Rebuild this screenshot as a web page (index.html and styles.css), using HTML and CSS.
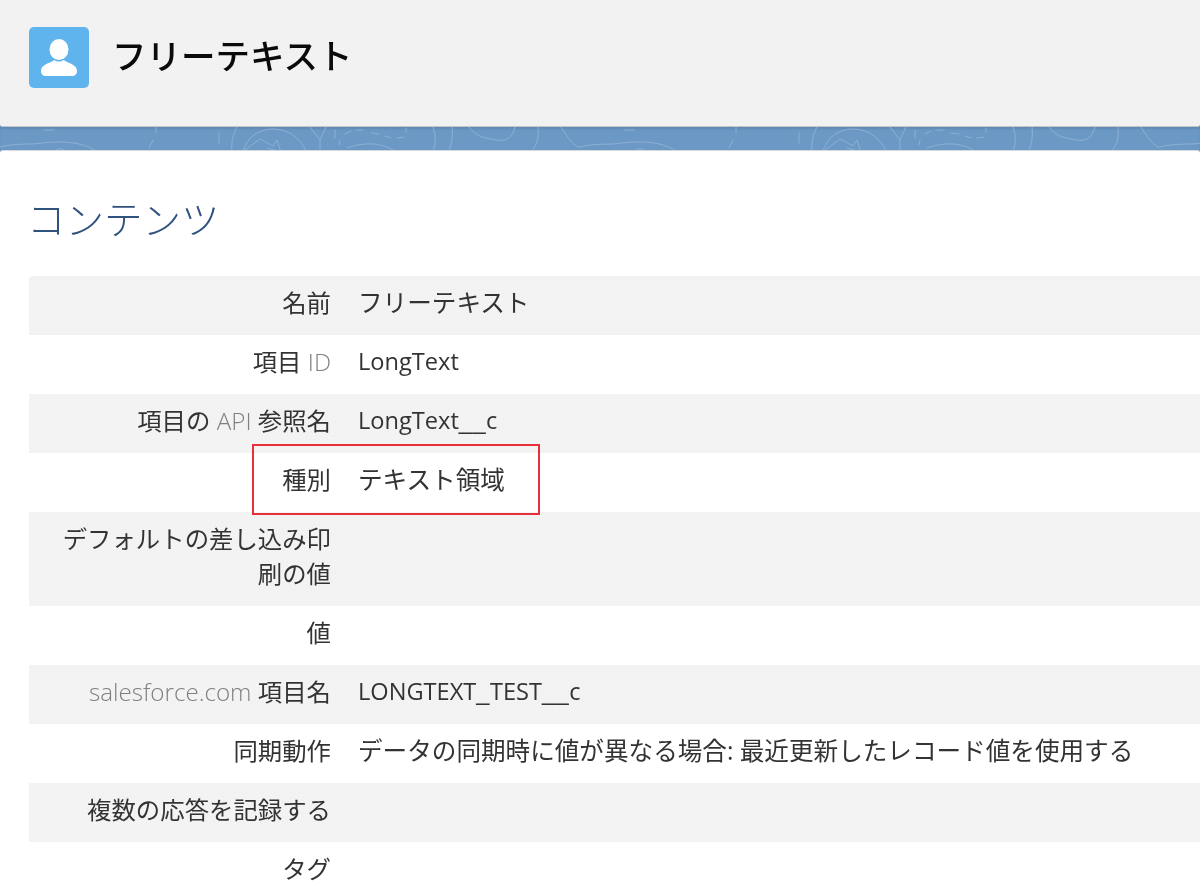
FILE: index.html
```html
<!DOCTYPE html>
<html lang="ja">
<head>
<meta charset="utf-8">
<title>フリーテキスト</title>
<link rel="stylesheet" href="styles.css">
</head>
<body>
<div class="page">
  <header class="head">
    <span class="avatar">
      <svg viewBox="0 0 60 61" width="60" height="61"><ellipse cx="30" cy="22.500" rx="9.500" ry="10.500" fill="#fff"/><path d="M12 44c0-5 5-7 10-9l3.500-2c2.500 2 6.500 2 9 0l3.500 2c5 2 10 4 10 9 0 3-2 5-5 5H17c-3 0-5-2-5-5z" fill="#fff"/></svg>
    </span>
    <h1 class="title">フリーテキスト</h1>
  </header>
  <div class="band">
    <svg class="contours" viewBox="0 0 1200 24" width="1200" height="24" fill="none">
      <defs>
        <pattern id="topo" width="580" height="24" patternUnits="userSpaceOnUse">
          <g stroke="#8dafd3" stroke-width="1" fill="none" stroke-linecap="round">
            <path d="M0 20c14-4 30-2 42-4 18-2 40-2 54 8M55 24c2-3 8-3 10 0"/>
            <path d="M44 3h10M156 0v6M153 13l-4 8M219 6v10"/>
            <path d="M237 0c-4 7-6 16-5 24M243 24c4-14 16-22 30-22 16 0 28 10 33 22"/>
            <path d="M245 23l15-11 13 7 4-6 4 12-14-4"/>
            <path d="M310 0l10 13 6-13M320 13v11M335 3v8M340 13l-1 5"/>
            <path d="M345 7l6-3M356 3h7M371 6l8 1M385 9l6 2M397 11l7-1M406 1v4"/>
            <path d="M347 21c14-5 32-7 48 3"/>
            <path d="M433 0c3 8 3 16 0 24M452 0c1 8 0 16-3 24"/>
            <path d="M469 0c6 8 14 11 22 12 10 2 20 4 24-12"/>
            <path d="M538 0c1 8 0 16-6 24"/>
            <path d="M561 0c5 8 10 16 17 20h2"/>
          </g>
        </pattern>
      </defs>
      <rect width="1200" height="24" fill="url(#topo)"/>
    </svg>
  </div>
  <main class="card">
    <h2 class="section">コンテンツ</h2>
    <div class="rows">
      <div class="row"><div class="label">名前</div><div class="value">フリーテキスト</div></div>
      <div class="row"><div class="label">項目 <span class="latin">ID</span></div><div class="value code">LongText</div></div>
      <div class="row"><div class="label">項目の <span class="latin">API</span> 参照名</div><div class="value code">LongText<span class="us">__</span>c</div></div>
      <div class="row"><div class="label">種別</div><div class="value">テキスト領域</div></div>
      <div class="row tall"><div class="label">デフォルトの差し込み印刷の値</div><div class="value"></div></div>
      <div class="row"><div class="label">値</div><div class="value"></div></div>
      <div class="row"><div class="label"><span class="latin">salesforce.com</span> 項目名</div><div class="value code">LONGTEXT<span class="us">_</span>TEST<span class="us">__</span>c</div></div>
      <div class="row"><div class="label">同期動作</div><div class="value">データの同期時に値が異なる場合: 最近更新したレコード値を使用する</div></div>
      <div class="row"><div class="label">複数の応答を記録する</div><div class="value"></div></div>
      <div class="row"><div class="label">タグ</div><div class="value"></div></div>
    </div>
    <div class="highlight"></div>
  </main>
</div>
</body>
</html>
```
FILE: styles.css
```css
html, body { margin: 0; padding: 0; }
body {
  background: #fff;
  font-family: "Open Sans", "Noto Sans CJK JP", sans-serif;
  color: #333;
}
.page {
  width: 1200px;
  height: 895px;
  overflow: hidden;
  display: flex;
  flex-direction: column;
  background: #6b98c5;
  filter: blur(0.35px);
}
.head {
  height: 126px;
  flex: none;
  display: flex;
  align-items: flex-start;
  background-color: #f2f2f2;
  background-image: radial-gradient(#ececec 0.6px, transparent 0.8px);
  background-size: 5px 5px;
  border-bottom: 1px solid #c6c6c6;
  border-bottom-left-radius: 3px;
  border-bottom-right-radius: 3px;
  padding-left: 29px;
}
.avatar {
  width: 60px;
  height: 61px;
  margin-top: 27px;
  flex: none;
  background: #5fb4ee;
  border-radius: 5px;
  display: block;
}
.avatar svg { display: block; }
.title {
  margin: 29px 0 0 23px;
  font-size: 34.5px;
  line-height: 50px;
  font-weight: 500;
  color: #0a0a0a;
  font-family: "Noto Sans CJK JP", sans-serif;
}
.band {
  height: 24px;
  flex: none;
  overflow: hidden;
  position: relative;
  box-shadow: inset 0 2px 2px rgba(50, 80, 120, 0.2);
}
.contours { display: block; }
.card {
  position: relative;
  flex: 1;
  background: #fff;
  border-top: 1px solid #d8d8d8;
  margin-top: -1px;
  border-top-left-radius: 3px;
  border-top-right-radius: 3px;
  padding-left: 29px;
}
.section {
  margin: 0 0 0 -2px;
  padding-top: 38px;
  box-sizing: border-box;
  height: 125px;
  line-height: 56px;
  font-size: 38.5px;
  font-weight: 300;
  color: #2f527f;
  font-family: "Noto Sans CJK JP", sans-serif;
}
.rows { display: flex; flex-direction: column; }
.row {
  display: flex;
  flex: none;
  height: 59px;
  align-items: flex-start;
  font-size: 24.4px;
  line-height: 35px;
  padding-top: 9px;
  box-sizing: border-box;
}
.row.tall { height: 93.5px; }
.row:nth-child(odd) {
  background-color: #f3f3f3;
  background-image: radial-gradient(#eeeeee 0.6px, transparent 0.8px);
  background-size: 4px 4px;
}
.row:first-child { border-top-left-radius: 4px; }
.label {
  width: 302px;
  padding-left: 20px;
  box-sizing: border-box;
  text-align: right;
  flex: none;
}
.value { margin-left: 27px; white-space: nowrap; font-size: 24.6px; }
.value.code { font-size: 23.6px; }
.latin { color: #7f7f7f; font-size: 24.2px; font-weight: 300; }
.us { font-family: "Liberation Sans", sans-serif; letter-spacing: 0.5px; }
.highlight {
  position: absolute;
  left: 252px;
  top: 293px;
  width: 288px;
  height: 71px;
  box-sizing: border-box;
  border: 2px solid #e8303c;
}
```
